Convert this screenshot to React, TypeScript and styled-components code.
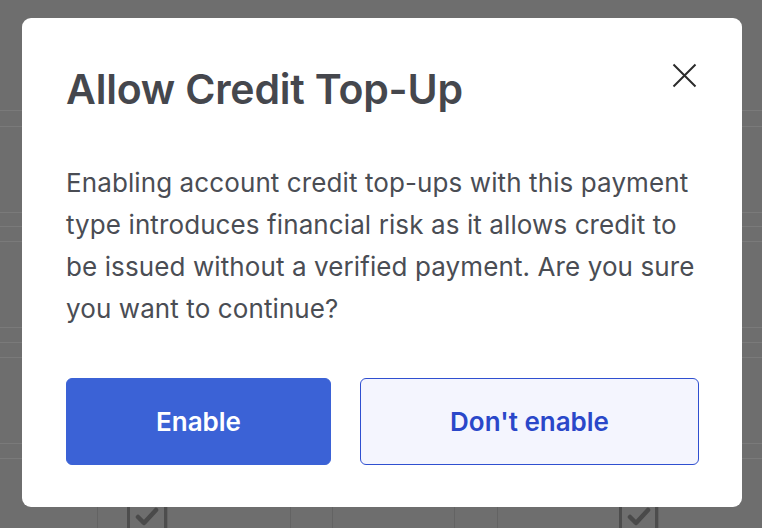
import React from 'react'
import styled, { createGlobalStyle } from 'styled-components'

const GlobalStyle = createGlobalStyle`
    html, body {
        margin: 0;
        padding: 0;
    }
    body {
        font-family: 'Inter', 'Liberation Sans', sans-serif;
    }
`

const rows = [111, 16, 86, 14, 15, 86, 15, 15, 86, 15]

const cells = [
    { w: 97, dark: false, check: false },
    { w: 30, dark: false, check: false },
    { w: 40, dark: true, check: true },
    { w: 123, dark: false, check: false },
    { w: 42, dark: false, check: false },
    { w: 122, dark: false, check: false },
    { w: 43, dark: false, check: false },
    { w: 122, dark: false, check: false },
    { w: 39, dark: true, check: true },
    { w: 104, dark: false, check: false },
]

const Check = () => (
    <svg width="26" height="20" viewBox="0 0 26 20">
        <path d="M4 10 L10 16 L22 3" fill="none" stroke="#4a4a4a" strokeWidth="4.5" strokeLinecap="round" strokeLinejoin="round" />
    </svg>
)

const CloseIcon = () => (
    <svg width="25" height="25" viewBox="0 0 25 25">
        <path d="M1.5 1.5 L23.5 23.5 M23.5 1.5 L1.5 23.5" stroke="#2b2b2b" strokeWidth="2" fill="none" />
    </svg>
)

const App = () => {
    return (
        <Page>
            <GlobalStyle />
            <Table>
                {rows.map((h, i) => (
                    <Row key={i} style={{ height: h }} />
                ))}
                <LastRow>
                    {cells.map((c, i) => (
                        <Cell key={i} dark={c.dark} style={{ width: c.w }}>
                            {c.check && <Check />}
                        </Cell>
                    ))}
                </LastRow>
            </Table>
            <Modal>
                <Header>
                    <Title>Allow Credit Top-Up</Title>
                    <CloseButton aria-label="Close">
                        <CloseIcon />
                    </CloseButton>
                </Header>
                <Body>
                    Enabling account credit top-ups with this payment type introduces financial risk as it allows credit to be issued without a verified payment. Are you sure you want to continue?
                </Body>
                <Actions>
                    <Button primary={true}>Enable</Button>
                    <Button>Don't enable</Button>
                </Actions>
            </Modal>
        </Page>
    )
}

export default App

const Page = styled.div`
    position: relative;
    width: 762px;
    height: 528px;
    overflow: hidden;
    background: #6e6e6e;
`

const Table = styled.div`
    display: flex;
    flex-direction: column;
    height: 100%;
`

const Row = styled.div`
    box-sizing: border-box;
    border-bottom: 1px solid #7a7a7a;
    flex-shrink: 0;
`

const LastRow = styled.div`
    display: flex;
    flex: 1;
    padding-top: 46px;
`

const Cell = styled.div<{ dark?: boolean }>`
    box-sizing: border-box;
    flex-shrink: 0;
    display: flex;
    justify-content: center;
    align-items: flex-start;
    padding-top: 2px;
    border-left: ${p => p.dark ? '3px solid #4d4d4d' : '1px solid #636363'};
    border-right: ${p => p.dark ? '3px solid #4d4d4d' : 'none'};
    &:first-child {
        border-left: none;
    }
`

const Modal = styled.div`
    position: absolute;
    left: 22px;
    top: 18px;
    width: 720px;
    height: 489px;
    box-sizing: border-box;
    background: #fff;
    border-radius: 9px;
    padding: 44px 43px 0 44px;
    display: flex;
    flex-direction: column;
`

const Header = styled.div`
    display: flex;
    justify-content: space-between;
    align-items: flex-start;
`

const Title = styled.h2`
    margin: 0;
    font-size: 41px;
    line-height: 54px;
    font-weight: 600;
    color: #45474d;
    letter-spacing: -0.2px;
`

const CloseButton = styled.button`
    background: none;
    border: none;
    padding: 0;
    margin: 1px 2px 0 0;
    cursor: pointer;
    display: flex;
`

const Body = styled.p`
    margin: 46px -4px 0 0;
    font-size: 26px;
    line-height: 42px;
    letter-spacing: 0.1px;
    color: #4a4d54;
`

const Actions = styled.div`
    display: flex;
    gap: 29px;
    margin-top: 48px;
`

const Button = styled.button<{ primary?: boolean }>`
    flex: 1 1 auto;
    height: 87px;
    border-radius: 6px;
    font-family: 'Inter', 'Liberation Sans', sans-serif;
    font-size: 26px;
    font-weight: 600;
    cursor: pointer;
    background: ${p => p.primary ? '#3b62d6' : '#f4f5fe'};
    color: ${p => p.primary ? '#ffffff' : '#2a47c9'};
    border: 1px solid ${p => p.primary ? '#3b62d6' : '#2f4fd0'};
`
